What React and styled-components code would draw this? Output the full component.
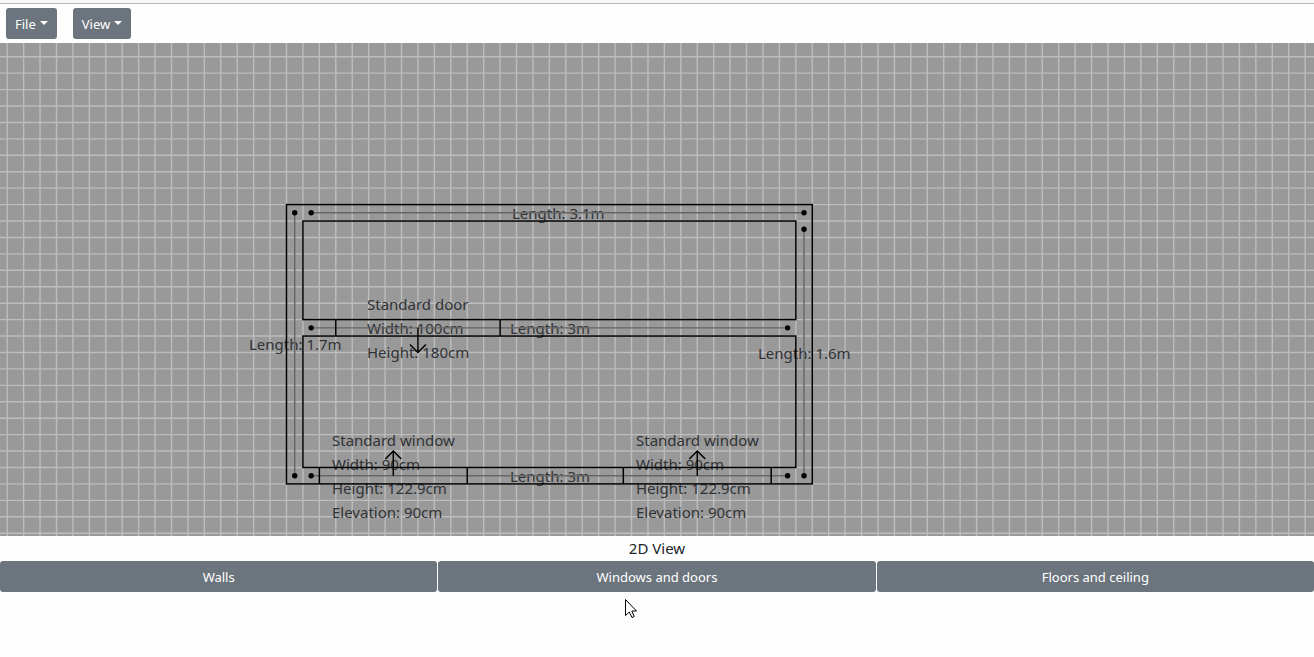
import React from "react";
import styled, { createGlobalStyle } from "styled-components";

const GlobalStyle = createGlobalStyle`
  * { box-sizing: border-box; }
  body {
    margin: 0;
    background: #fefefe;
    color: #212529;
    font-family: "Noto Sans", "Open Sans", sans-serif;
    font-size: 15px;
    line-height: 24px;
  }
`;

const Page = styled.div`
  position: relative;
  display: flex;
  flex-direction: column;
  min-height: 100vh;
  overflow: hidden;
`;

const TopStrip = styled.div`
  height: 4px;
  background: #f7f7f7;
  border-bottom: 1px solid #bbbbbb;
`;

const Toolbar = styled.header`
  display: flex;
  gap: 16px;
  padding: 4px 6px;
`;

const Button = styled.button`
  display: flex;
  align-items: center;
  justify-content: center;
  flex: ${(p) => (p.$grow ? "1 1 0" : "none")};
  height: 31px;
  padding: 2px 9px 0;
  border: 0;
  border-radius: 3px;
  background: #6c757d;
  color: #fff;
  font-family: inherit;
  font-size: 13px;
  line-height: 21px;
  cursor: pointer;
`;

const Caret = styled.span`
  margin-left: 4px;
  margin-bottom: 4px;
  border-top: 4px solid #fff;
  border-left: 4px solid transparent;
  border-right: 4px solid transparent;
`;

const Canvas = styled.main`
  position: relative;
  height: 75vh;
  overflow: hidden;
  background: #999;
`;

const Drawing = styled.svg`
  position: absolute;
  inset: 0;
  width: 100%;
  height: 100%;
`;

const Label = styled.div`
  position: absolute;
  left: ${(p) => p.$x}px;
  top: ${(p) => p.$y}px;
  white-space: pre;
  color: #303336;
`;

const Caption = styled.div`
  height: 25px;
  line-height: 25px;
  text-align: center;
`;

const Tools = styled.nav`
  display: flex;
  gap: 1px;
`;

const Pointer = styled.svg`
  position: absolute;
  left: 625px;
  top: 599px;
  pointer-events: none;
`;

// One grid cell is ten centimetres; the plan's corner sits on a grid crossing.
const CELL = 16.43;
const ORIGIN = { x: 286.5, y: 161.6 };
const px = (u) => ORIGIN.x + u * CELL;
const py = (u) => ORIGIN.y + u * CELL;

const columns = Array.from({ length: 240 }, (_, i) => px(i - 18));
const rows = Array.from({ length: 120 }, (_, i) => py(i - 10));

const rooms = [
  [0, 0, 32, 17],
  [1, 1, 30, 6],
  [1, 8, 30, 8],
];

const axes = [
  [1.5, 0.5, 31.5, 0.5],
  [0.5, 0.5, 0.5, 16.5],
  [31.5, 1.5, 31.5, 16.5],
  [1.5, 7.5, 30.5, 7.5],
  [1.5, 16.5, 30.5, 16.5],
];

const openings = [
  { from: 3, to: 13, top: 7, dir: 1 },
  { from: 2, to: 11, top: 16, dir: -1 },
  { from: 20.5, to: 29.5, top: 16, dir: -1 },
];

const labels = [
  { x: 512, y: 158, text: "Length: 3.1m" },
  { x: 249, y: 289, text: "Length: 1.7m" },
  { x: 758, y: 298, text: "Length: 1.6m" },
  { x: 510, y: 273, text: "Length: 3m" },
  { x: 510, y: 421, text: "Length: 3m" },
  { x: 367, y: 249, text: "Standard door\nWidth: 100cm\nHeight: 180cm" },
  { x: 332, y: 385, text: "Standard window\nWidth: 90cm\nHeight: 122.9cm\nElevation: 90cm" },
  { x: 636, y: 385, text: "Standard window\nWidth: 90cm\nHeight: 122.9cm\nElevation: 90cm" },
];

function Grid() {
  return (
    <Drawing aria-hidden="true">
      <g stroke="#bdbdbd" strokeWidth="1.4">
        {columns.map((x) => <line key={x} x1={x} x2={x} y1="0" y2="2000" />)}
        {rows.map((y) => <line key={y} x1="0" x2="4000" y1={y} y2={y} />)}
      </g>
    </Drawing>
  );
}

function Opening({ from, to, top, dir }) {
  const x = px((from + to) / 2);
  const y = py(top + 0.5);
  const tip = y + dir * 1.5 * CELL;
  const wing = tip - dir * 8;
  return (
    <g>
      <path d={`M${px(from)} ${py(top)}V${py(top + 1)}M${px(to)} ${py(top)}V${py(top + 1)}`} />
      <path d={`M${x} ${y}V${tip}M${x - 8} ${wing}L${x} ${tip}L${x + 8} ${wing}`} />
    </g>
  );
}

function Plan() {
  return (
    <Drawing aria-hidden="true">
      <g stroke="#666" strokeWidth="1.4">
        {axes.map(([a, b, c, d], i) => (
          <line key={i} x1={px(a)} y1={py(b)} x2={px(c)} y2={py(d)} />
        ))}
      </g>
      <g fill="none" stroke="#000" strokeWidth="1.5">
        {rooms.map(([x, y, w, h], i) => (
          <rect key={i} x={px(x)} y={py(y)} width={w * CELL} height={h * CELL} />
        ))}
        {openings.map((o) => <Opening key={o.from} {...o} />)}
      </g>
      {axes.flatMap(([a, b, c, d], i) => [
        <circle key={`${i}a`} cx={px(a)} cy={py(b)} r="2.7" />,
        <circle key={`${i}b`} cx={px(c)} cy={py(d)} r="2.7" />,
      ])}
    </Drawing>
  );
}

export default function App() {
  return (
    <>
      <GlobalStyle />
      <Page>
        <TopStrip />
        <Toolbar>
          <Button type="button" aria-haspopup="menu">File<Caret /></Button>
          <Button type="button" aria-haspopup="menu">View<Caret /></Button>
        </Toolbar>
        <Canvas>
          <Grid />
          {labels.map((l) => (
            <Label key={`${l.x}-${l.y}`} $x={l.x} $y={l.y}>{l.text}</Label>
          ))}
          <Plan />
        </Canvas>
        <Caption>2D View</Caption>
        <Tools>
          <Button type="button" $grow>Walls</Button>
          <Button type="button" $grow>Windows and doors</Button>
          <Button type="button" $grow>Floors and ceiling</Button>
        </Tools>
        <Pointer width="13" height="20" viewBox="0 0 13 20" aria-hidden="true">
          <path
            d="M.5 .5V16.5L4.3 13L7 18.5L9.2 17.5L6.8 12H11.5Z"
            fill="#fff"
            stroke="#000"
          />
        </Pointer>
      </Page>
    </>
  );
}
